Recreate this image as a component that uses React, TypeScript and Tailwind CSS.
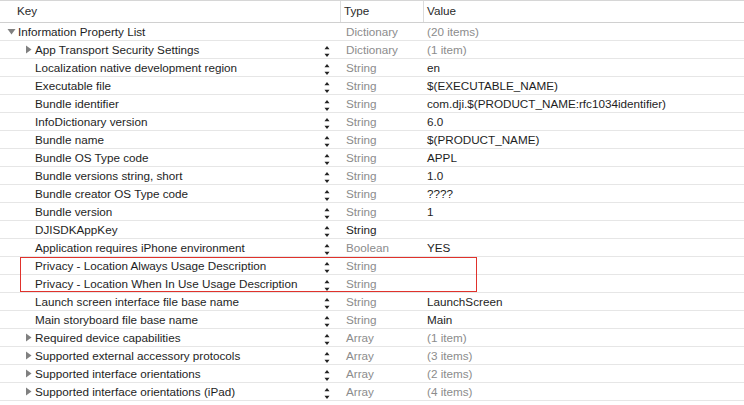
type Row = {
  key: string;
  indent: 0 | 1;
  disclosure?: "down" | "right";
  type: string;
  typeDark?: boolean;
  value: string;
  valueGray?: boolean;
  stepper?: boolean;
};

const rows: Row[] = [
  { key: "Information Property List", indent: 0, disclosure: "down", type: "Dictionary", value: "(20 items)", valueGray: true },
  { key: "App Transport Security Settings", indent: 1, disclosure: "right", type: "Dictionary", value: "(1 item)", valueGray: true, stepper: true },
  { key: "Localization native development region", indent: 1, type: "String", value: "en", stepper: true },
  { key: "Executable file", indent: 1, type: "String", value: "$(EXECUTABLE_NAME)", stepper: true },
  { key: "Bundle identifier", indent: 1, type: "String", value: "com.dji.$(PRODUCT_NAME:rfc1034identifier)", stepper: true },
  { key: "InfoDictionary version", indent: 1, type: "String", value: "6.0", stepper: true },
  { key: "Bundle name", indent: 1, type: "String", value: "$(PRODUCT_NAME)", stepper: true },
  { key: "Bundle OS Type code", indent: 1, type: "String", value: "APPL", stepper: true },
  { key: "Bundle versions string, short", indent: 1, type: "String", value: "1.0", stepper: true },
  { key: "Bundle creator OS Type code", indent: 1, type: "String", value: "????", stepper: true },
  { key: "Bundle version", indent: 1, type: "String", value: "1", stepper: true },
  { key: "DJISDKAppKey", indent: 1, type: "String", typeDark: true, value: "", stepper: true },
  { key: "Application requires iPhone environment", indent: 1, type: "Boolean", value: "YES", stepper: true },
  { key: "Privacy - Location Always Usage Description", indent: 1, type: "String", value: "", stepper: true },
  { key: "Privacy - Location When In Use Usage Description", indent: 1, type: "String", value: "", stepper: true },
  { key: "Launch screen interface file base name", indent: 1, type: "String", value: "LaunchScreen", stepper: true },
  { key: "Main storyboard file base name", indent: 1, type: "String", value: "Main", stepper: true },
  { key: "Required device capabilities", indent: 1, disclosure: "right", type: "Array", value: "(1 item)", valueGray: true, stepper: true },
  { key: "Supported external accessory protocols", indent: 1, disclosure: "right", type: "Array", value: "(3 items)", valueGray: true, stepper: true },
  { key: "Supported interface orientations", indent: 1, disclosure: "right", type: "Array", value: "(2 items)", valueGray: true, stepper: true },
  { key: "Supported interface orientations (iPad)", indent: 1, disclosure: "right", type: "Array", value: "(4 items)", valueGray: true, stepper: true },
];

function Disclosure({ dir }: { dir: "down" | "right" }) {
  return (
    <svg width="9" height="9" viewBox="0 0 9 9" className="shrink-0">
      {dir === "down" ? (
        <path d="M0.5 2 L8.5 2 L4.5 7.5 Z" fill="#808080" />
      ) : (
        <path d="M2 0.5 L7.5 4.5 L2 8.5 Z" fill="#808080" />
      )}
    </svg>
  );
}

function Stepper() {
  return (
    <svg width="6" height="12" viewBox="0 0 6 12" className="shrink-0 mt-[4px]">
      <path d="M3 0 L5.5 3.2 L0.5 3.2 Z" fill="#222" />
      <path d="M0.5 7.8 L5.5 7.8 L3 11 Z" fill="#222" />
    </svg>
  );
}

export default function App() {
  return (
    <div
      className="w-[744px] h-[405px] overflow-hidden bg-white text-[11.7px] text-[#1e1e1e] relative"
      style={{ fontFamily: '"Liberation Sans", Arial, sans-serif' }}
    >
      {/* header */}
      <div className="grid grid-cols-[340px_83px_1fr] h-[23px] border-t border-[#d6d6d6] border-b border-b-[#d0d0d0] text-[#2a2a2a]">
        <div className="pl-[17px] pb-px flex items-center">Key</div>
        <div className="pl-[3px] pb-px flex items-center border-l border-[#dcdcdc]">Type</div>
        <div className="pl-[3px] pb-px flex items-center border-l border-[#dcdcdc]">Value</div>
      </div>

      {/* rows */}
      {rows.map((r) => (
        <div key={r.key} className="grid grid-cols-[340px_83px_1fr] h-[18px] border-b border-[#e6e6e6]">
          <div className={`flex items-center pb-px ${r.indent ? "pl-[24px]" : "pl-[7px]"} pr-[10px]`}>
            <div className="w-[11px] flex items-center">{r.disclosure && <Disclosure dir={r.disclosure} />}</div>
            <span className="flex-1 whitespace-nowrap">{r.key}</span>
            {r.stepper && <Stepper />}
          </div>
          <div className={`pl-[6px] pb-px flex items-center ${r.typeDark ? "text-[#1e1e1e]" : "text-[#8c8c8c]"}`}>{r.type}</div>
          <div className={`pl-[4px] pb-px flex items-center whitespace-nowrap ${r.valueGray ? "text-[#8c8c8c]" : ""}`}>{r.value}</div>
        </div>
      ))}

      {/* highlight box */}
      <div className="absolute left-[20px] top-[257px] w-[457px] h-[35px] border border-[#e0322c] pointer-events-none" />
    </div>
  );
}
